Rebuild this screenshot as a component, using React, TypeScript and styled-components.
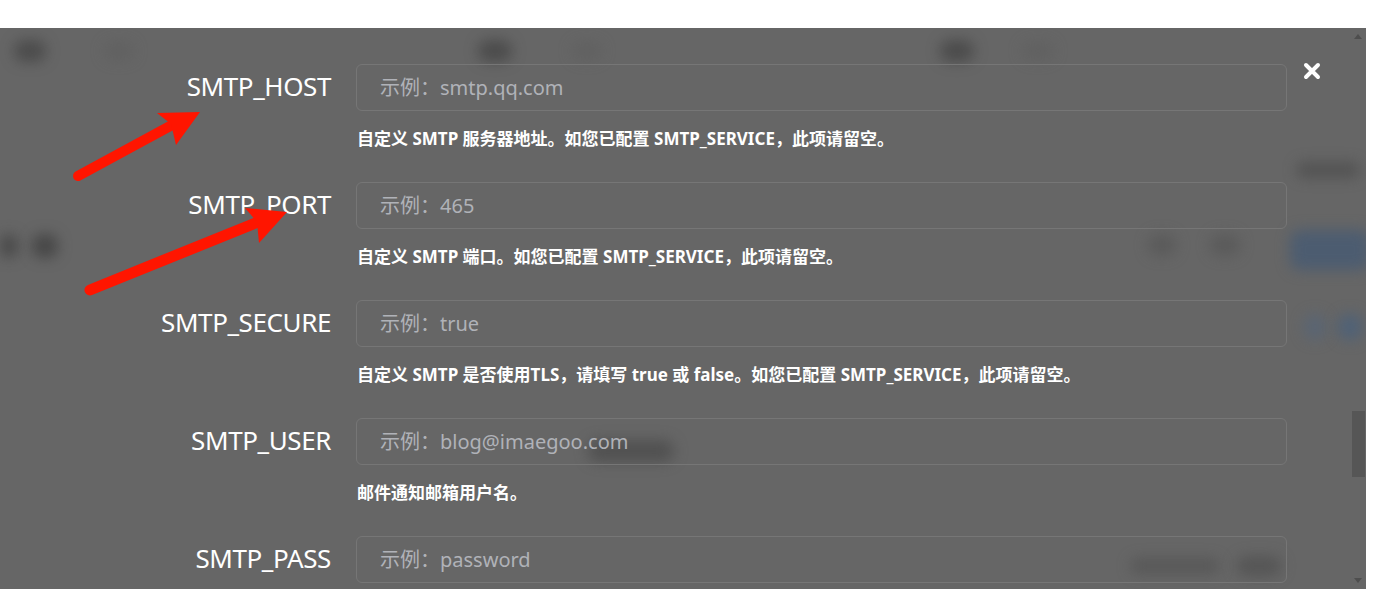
import { createGlobalStyle, styled } from "styled-components";

const GlobalStyle = createGlobalStyle`
  html, body {
    margin: 0;
    padding: 0;
    background: #fff;
  }
  body {
    font-family: "Noto Sans", "Noto Sans CJK SC", sans-serif;
  }
`;

interface Field {
  name: string;
  example: string;
  help?: string;
}

const fields: Field[] = [
  {
    name: "SMTP_HOST",
    example: "smtp.qq.com",
    help: "自定义 SMTP 服务器地址。如您已配置 SMTP_SERVICE，此项请留空。",
  },
  {
    name: "SMTP_PORT",
    example: "465",
    help: "自定义 SMTP 端口。如您已配置 SMTP_SERVICE，此项请留空。",
  },
  {
    name: "SMTP_SECURE",
    example: "true",
    help: "自定义 SMTP 是否使用TLS，请填写 true 或 false。如您已配置 SMTP_SERVICE，此项请留空。",
  },
  {
    name: "SMTP_USER",
    example: "blog@imaegoo.com",
    help: "邮件通知邮箱用户名。",
  },
  { name: "SMTP_PASS", example: "password" },
];

// blurred shapes of the page behind the overlay
const blobs = [
  { x: 14, y: 12, w: 32, h: 22, c: "rgba(50,50,50,0.5)" },
  { x: 104, y: 14, w: 30, h: 18, c: "rgba(90,90,90,0.45)" },
  { x: 478, y: 12, w: 34, h: 22, c: "rgba(50,50,50,0.5)" },
  { x: 572, y: 14, w: 30, h: 18, c: "rgba(90,90,90,0.45)" },
  { x: 940, y: 12, w: 34, h: 22, c: "rgba(50,50,50,0.5)" },
  { x: 1022, y: 14, w: 32, h: 18, c: "rgba(90,90,90,0.45)" },
  { x: 1296, y: 134, w: 64, h: 16, c: "rgba(60,60,60,0.45)" },
  { x: 0, y: 206, w: 18, h: 24, c: "rgba(50,50,50,0.55)" },
  { x: 32, y: 206, w: 26, h: 24, c: "rgba(50,50,50,0.6)" },
  { x: 1148, y: 206, w: 28, h: 22, c: "rgba(80,80,80,0.5)" },
  { x: 1210, y: 206, w: 30, h: 22, c: "rgba(80,80,80,0.5)" },
  { x: 1290, y: 202, w: 80, h: 40, c: "rgba(70,90,115,0.8)" },
  { x: 1304, y: 286, w: 22, h: 26, c: "rgba(80,100,125,0.55)" },
  { x: 1338, y: 286, w: 24, h: 26, c: "rgba(70,95,125,0.7)" },
  { x: 588, y: 412, w: 86, h: 22, c: "rgba(60,60,60,0.5)" },
  { x: 1130, y: 530, w: 90, h: 16, c: "rgba(70,70,70,0.45)" },
  { x: 1236, y: 528, w: 46, h: 20, c: "rgba(70,70,70,0.5)" },
];

function App() {
  return (
    <>
      <GlobalStyle />
      <Frame>
        <Backdrop>
          {blobs.map((b, i) => (
            <Blob
              key={i}
              style={{ left: b.x, top: b.y, width: b.w, height: b.h, background: b.c }}
            />
          ))}
        </Backdrop>

        <Main>
          <Form>
            {fields.map((f) => (
              <Row key={f.name}>
                <Label>{f.name}</Label>
                <Input placeholder={`示例：${f.example}`} />
                {f.help && <Help>{f.help}</Help>}
              </Row>
            ))}
          </Form>

          <Close aria-label="close">
            <svg width="18" height="18" viewBox="0 0 18 18">
              <path
                d="M3 3 L15 15 M15 3 L3 15"
                stroke="#fff"
                strokeWidth="4"
                strokeLinecap="round"
              />
            </svg>
          </Close>

          <Arrows width="400" height="300" viewBox="0 0 400 300">
            <line x1="78" y1="148" x2="172" y2="97" stroke="#ff1500" strokeWidth="10" strokeLinecap="round" />
            <polygon points="200,84 157,85 171,96 176,117" fill="#ff1500" />
            <line x1="90" y1="262" x2="258" y2="194" stroke="#ff1500" strokeWidth="11" strokeLinecap="round" />
            <polygon points="287,184 245,180 257,194 259,215" fill="#ff1500" />
          </Arrows>
        </Main>

        <Scrollbar>
          <ScrollArrow />
          <Track>
            <Thumb style={{ marginTop: 368 }} />
          </Track>
          <ScrollArrow $down />
        </Scrollbar>
      </Frame>
    </>
  );
}

export default App;

const Frame = styled.div`
  position: relative;
  margin-top: 28px;
  width: 1366px;
  height: 561px;
  background: #666;
  display: flex;
  overflow: hidden;
`;

const Backdrop = styled.div`
  position: absolute;
  inset: 0;
  pointer-events: none;
`;

const Blob = styled.div`
  position: absolute;
  border-radius: 10px;
  filter: blur(7px);
`;

const Main = styled.div`
  position: relative;
  flex: 1;
  overflow: hidden;
`;

const Form = styled.div`
  padding-top: 36px;
  display: flex;
  flex-direction: column;
  gap: 31px;
`;

const Row = styled.div`
  display: grid;
  grid-template-columns: 331px 931px;
  column-gap: 25px;
  row-gap: 16px;
  align-items: center;
`;

const Label = styled.div`
  text-align: right;
  color: #fff;
  font-size: 26px;
  letter-spacing: -0.4px;
  line-height: 30px;
  padding-bottom: 4px;
`;

const Input = styled.input`
  box-sizing: border-box;
  height: 47px;
  width: 100%;
  padding: 0 0 0 23px;
  border: 1px solid #767676;
  border-radius: 6px;
  background: transparent;
  font-family: "Noto Sans", "Noto Sans CJK SC", sans-serif;
  font-size: 20px;
  color: #fff;
  outline: none;

  &::placeholder {
    color: #b0b2b8;
  }
`;

const Help = styled.div`
  grid-column: 2;
  padding-left: 1px;
  color: #fff;
  font-size: 17px;
  font-weight: 700;
  line-height: 24px;
`;

const Close = styled.div`
  position: absolute;
  top: 34px;
  right: 29px;
  width: 18px;
  height: 18px;
  display: flex;
`;

const Arrows = styled.svg`
  position: absolute;
  left: 0;
  top: 0;
  pointer-events: none;
`;

const Scrollbar = styled.div`
  position: relative;
  width: 16px;
  display: flex;
  flex-direction: column;
  align-items: center;
`;

const ScrollArrow = styled.div<{ $down?: boolean }>`
  width: 0;
  height: 0;
  margin: ${(p) => (p.$down ? "4px 0 6px" : "6px 0 4px")};
  border-left: 4px solid transparent;
  border-right: 4px solid transparent;
  ${(p) =>
    p.$down ? "border-top: 5px solid #4e4e4e;" : "border-bottom: 5px solid #4e4e4e;"}
`;

const Track = styled.div`
  flex: 1;
  width: 100%;
  display: flex;
  flex-direction: column;
  align-items: center;
`;

const Thumb = styled.div`
  width: 13px;
  height: 66px;
  background: #565656;
`;
